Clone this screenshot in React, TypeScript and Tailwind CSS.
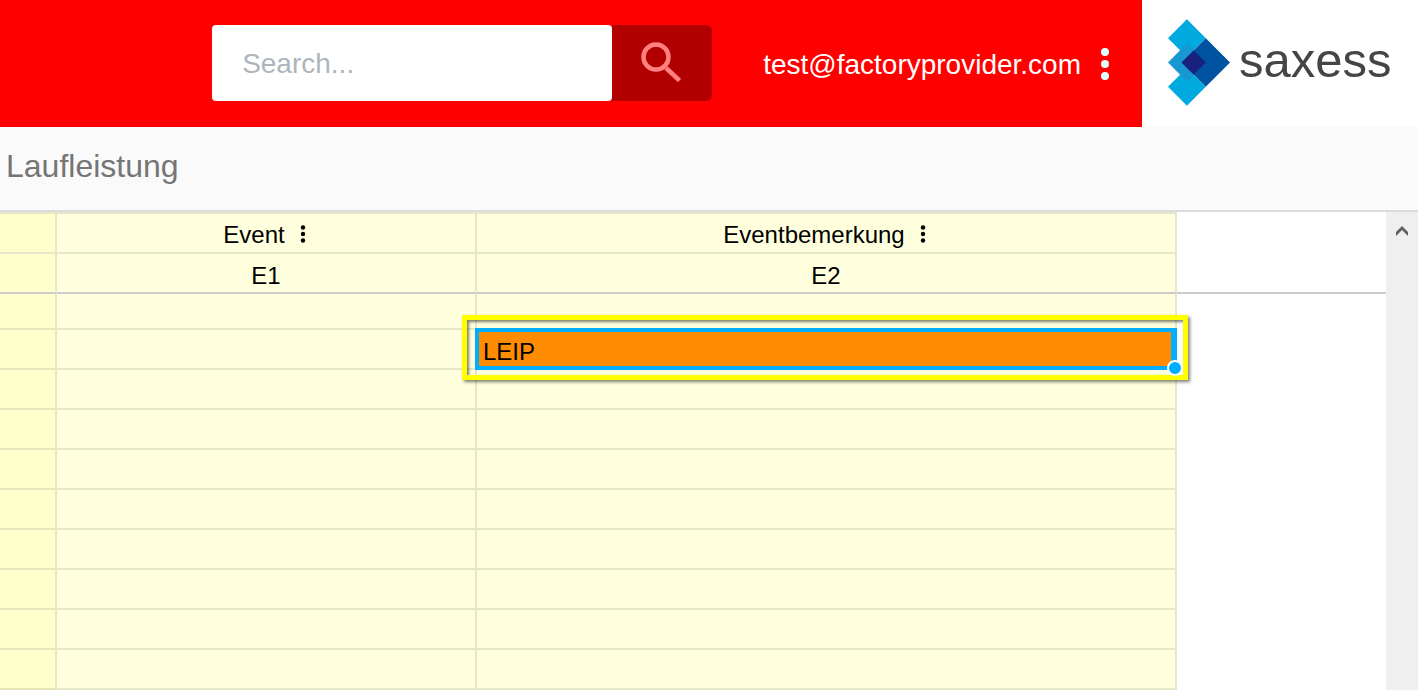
import React from "react";

function Dots({ className }: { className: string }) {
  return (
    <svg viewBox="0 0 8 32" className={className} fill="currentColor" aria-hidden="true">
      <circle cx="4" cy="4" r="4" />
      <circle cx="4" cy="16" r="4" />
      <circle cx="4" cy="28" r="4" />
    </svg>
  );
}

function SmallDots() {
  return (
    <svg viewBox="0 0 6 18" className="h-[18px] w-1.5" fill="currentColor" aria-hidden="true">
      <circle cx="3" cy="2.5" r="2.2" />
      <circle cx="3" cy="9" r="2.2" />
      <circle cx="3" cy="15.5" r="2.2" />
    </svg>
  );
}

function Logo() {
  return (
    <a href="#" className="flex h-full w-[276px] shrink-0 items-center bg-white pb-[3px] pl-[26px]">
      <svg viewBox="0 0 187 261" className="h-[87px] w-[62px] shrink-0" aria-hidden="true">
        <path d="M57 0 114 57 57 114 0 57Z" fill="#00aade" />
        <path d="M57 147 114 204 57 261 0 204Z" fill="#00aade" />
        <path d="M57 73.500 114 130.500 57 187.500 0 130.500Z" fill="#1997d1" />
        <path d="M114 57.500 187 130.500 114 203.500 41 130.500Z" fill="#0053a1" />
        <path d="M77.500 94 114 130.500 77.500 167 41 130.500Z" fill="#18227c" />
      </svg>
      <span className="pb-1 pl-[9px] text-[49px] leading-[56px] text-[#454547]">saxess</span>
    </a>
  );
}

function Header() {
  return (
    <header className="flex h-[127px] bg-[#ff0000]">
      <div className="flex flex-1 items-center justify-end pr-[33px]">
        <form className="mb-0.5 flex h-[76px] w-[500px]" onSubmit={(e) => e.preventDefault()}>
          <input
            type="text"
            aria-label="Search"
            placeholder="Search..."
            className="min-w-0 flex-1 rounded-[4px] bg-white px-[30px] pt-0.5 text-[28px] text-black outline-none placeholder:text-[#adb5bd]"
          />
          <button
            type="submit"
            aria-label="Search"
            className="flex w-[100px] items-center justify-center rounded-r-[6px] bg-[#b20000] pr-0.5 pb-0.5 text-[#ff8080]"
          >
            <svg viewBox="0 0 40 40" className="h-10 w-10" fill="none" stroke="currentColor" aria-hidden="true">
              <circle cx="15" cy="15" r="12.500" strokeWidth="4.500" />
              <path d="M25 26 38.500 38.500" strokeWidth="4.500" />
            </svg>
          </button>
        </form>
        <span className="ml-[51px] pt-0.5 text-[28px] leading-8 text-white">test@factoryprovider.com</span>
        <button type="button" aria-label="Account menu" className="ml-5 text-[#e0ffff]">
          <Dots className="h-8 w-2" />
        </button>
      </div>
      <Logo />
    </header>
  );
}

const columns = [
  { name: "Event", code: "E1" },
  { name: "Eventbemerkung", code: "E2" },
];

const rows = ["", "LEIP", "", "", "", "", "", "", "", ""];

function Selection({ value }: { value: string }) {
  return (
    <>
      <div className="pointer-events-none absolute -top-[15px] -right-[13px] -bottom-3 -left-[15px] z-10 border-[5px] border-[#ffff00] shadow-[2px_2px_3px_rgba(0,0,0,0.5),inset_2px_2px_3px_rgba(0,0,0,0.5)]" />
      <div className="absolute -top-0.5 -right-0.5 -bottom-0.5 -left-0.5 z-10 flex items-center border-4 border-r-[6px] border-[#00aeff] bg-[#ff8c00] pt-1.5 pl-1">
        {value}
      </div>
      <div className="absolute -right-2 -bottom-2 z-10 h-4 w-4 rounded-full border-2 border-white bg-[#00aeff]" />
    </>
  );
}

function Grid() {
  return (
    <table className="w-full table-fixed border-separate border-spacing-0 text-2xl leading-7 text-black">
      <colgroup>
        <col className="w-[57px]" />
        <col className="w-[420px]" />
        <col className="w-[700px]" />
        <col />
      </colgroup>
      <thead>
        <tr className="h-[42px]">
          <th className="border-y-2 border-r-2 border-[#e6e6c8] bg-[#ffffcc] p-0" />
          {columns.map((c) => (
            <th key={c.name} className="border-y-2 border-r-2 border-[#e6e6c8] bg-[#ffffdd] p-0 font-normal">
              <div className="flex items-center justify-center gap-[15px] pt-1 pr-[3px]">
                {c.name}
                <button type="button" aria-label={`${c.name} menu`} className="mb-0.5">
                  <SmallDots />
                </button>
              </div>
            </th>
          ))}
          <th className="p-0" />
        </tr>
        <tr className="h-10">
          <th className="border-r-2 border-b-2 border-r-[#e6e6c8] border-b-[#cccccc] bg-[#ffffcc] p-0" />
          {columns.map((c) => (
            <th
              key={c.code}
              className="border-r-2 border-b-2 border-r-[#e6e6c8] border-b-[#cccccc] bg-[#ffffdd] p-0 pt-1.5 font-normal"
            >
              {c.code}
            </th>
          ))}
          <th className="border-b-2 border-[#cccccc] p-0" />
        </tr>
      </thead>
      <tbody>
        {rows.map((value, i) => (
          <tr key={i} className="h-10 first:h-9">
            <td className="border-r-2 border-b-2 border-r-[#e6e6c8] border-b-[#e6e6b8] bg-[#ffffcc] p-0" />
            <td className="border-r-2 border-b-2 border-[#e6e6c8] bg-[#ffffdd] p-0" />
            <td className="relative border-r-2 border-b-2 border-[#e6e6c8] bg-[#ffffdd] p-0">
              {value && <Selection value={value} />}
            </td>
            <td className="p-0" />
          </tr>
        ))}
      </tbody>
    </table>
  );
}

export default function App() {
  return (
    <div className="flex min-h-screen flex-col bg-white font-['Liberation_Sans',Arial,sans-serif]">
      <Header />
      <div className="h-[85px] border-b-2 border-[#dcdcdc] bg-[#fafafa] px-1.5 pt-[19px]">
        <h1 className="text-[32px] leading-10 text-[#757575]">Laufleistung</h1>
      </div>
      <main className="flex flex-1">
        <div className="min-w-0 flex-1">
          <Grid />
        </div>
        <div className="flex w-8 shrink-0 flex-col items-center bg-[#efefef] pt-3.5">
          <button type="button" aria-label="Scroll up" className="text-[#606060]">
            <svg viewBox="0 0 12 10" className="h-2.5 w-3" fill="currentColor" aria-hidden="true">
              <path d="M6 0 12 6V10L6 4 0 10V6Z" />
            </svg>
          </button>
        </div>
      </main>
    </div>
  );
}
